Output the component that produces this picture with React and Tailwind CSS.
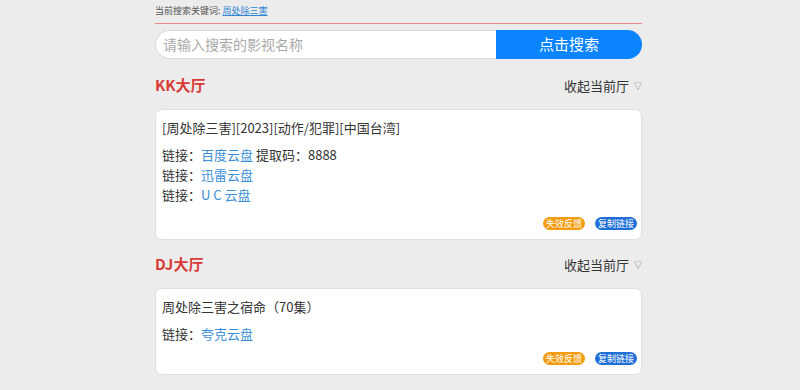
import { useState } from 'react';

const FONT = { fontFamily: '"Noto Sans CJK SC", "Noto Sans", sans-serif' };

const HALLS = [
  {
    name: 'KK大厅',
    items: [
      {
        title: '[周处除三害][2023][动作/犯罪][中国台湾]',
        links: [
          { label: '百度云盘', extra: '提取码：8888' },
          { label: '迅雷云盘' },
          { label: 'U C 云盘' }
        ],
        // this block has a little more room below the links
        tall: true
      }
    ]
  },
  {
    name: 'DJ大厅',
    items: [
      {
        title: '周处除三害之宿命（70集）',
        links: [{ label: '夸克云盘' }]
      }
    ]
  }
];

function Hall({ hall }) {
  return (
    <section>
      <div className="flex h-[31px] items-center justify-between">
        <h2 className="text-[15px] font-bold text-[#d93a36]">{hall.name}</h2>
        <button className="flex items-center gap-[5px] text-[13px] text-[#333]">
          收起当前厅
          <span className="text-[8px] text-[#777]">▽</span>
        </button>
      </div>
      {hall.items.map((item, i) => (
        <div
          key={i}
          className="mt-[8px] rounded-[7px] border border-[#e0e0e0] bg-white pt-[7px] pr-[4px] pb-[9px] pl-[6px]"
        >
          <p className="text-[13px] leading-[22px] text-[#333]">{item.title}</p>
          <ul className="mt-[6px]">
            {item.links.map((l) => (
              <li key={l.label} className="text-[13px] leading-[20px] text-[#333]">
                链接：
                <a className="text-[#3a8fd5]">{l.label}</a>
                {l.extra && <span> {l.extra}</span>}
              </li>
            ))}
          </ul>
          <div className={`flex justify-end gap-[10px] ${item.tall ? 'mt-[12px]' : 'mt-[8px]'}`}>
            <span className="rounded-full bg-[#f39c12] px-[3px] text-[9px] leading-[13px] text-white">
              失效反馈
            </span>
            <span className="rounded-full bg-[#1f6fd6] px-[3px] text-[9px] leading-[13px] text-white">
              复制链接
            </span>
          </div>
        </div>
      ))}
    </section>
  );
}

export default function App() {
  const [q, setQ] = useState('');
  return (
    <div className="min-h-[390px] bg-[#ececec]" style={FONT}>
      <div className="ml-[155px] w-[487px]">
        <div className="pt-[4px] pb-[6px] text-[9px] leading-[13px] text-[#555]">
          当前搜索关键词: <a className="text-[#2e86d8] underline">周处除三害</a>
        </div>
        <div className="h-px bg-[#e68a8a]" />
        <div className="mt-[6px] flex h-[29px] overflow-hidden rounded-full">
          <input
            value={q}
            onChange={(e) => setQ(e.target.value)}
            placeholder="请输入搜索的影视名称"
            className="min-w-0 flex-1 rounded-l-full border border-r-0 border-[#d8d8d8] bg-white px-[7px] text-[14px] text-[#333] outline-none placeholder:text-[#aaa]"
          />
          <button className="w-[146px] bg-[#0a84ff] text-[15px] text-white">点击搜索</button>
        </div>
        <div className="mt-[11px] flex flex-col gap-[9px]">
          {HALLS.map((h) => (
            <Hall key={h.name} hall={h} />
          ))}
        </div>
      </div>
    </div>
  );
}
